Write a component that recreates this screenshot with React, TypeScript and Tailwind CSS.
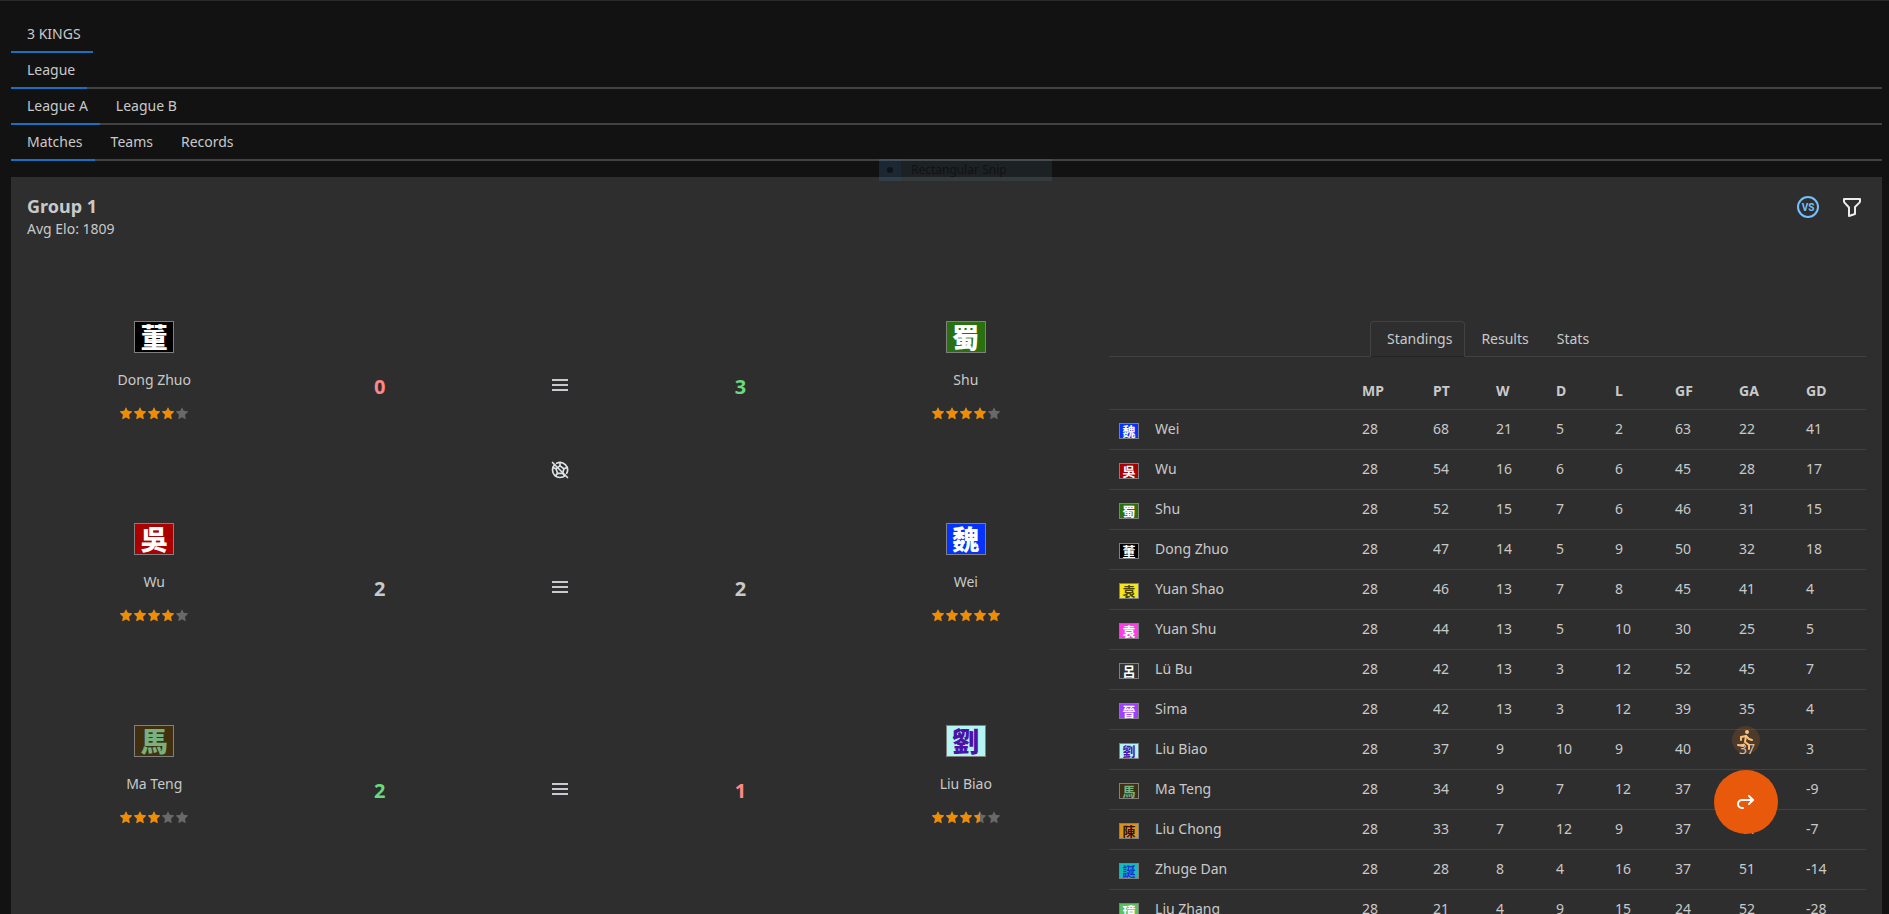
import * as React from "react";
import { TbArrowForwardUp, TbBallFootballOff, TbFilter, TbRun } from "react-icons/tb";
import { clsx } from "clsx";

interface Team {
  name: string;
  glyph: string;
  flag: string;
}

interface Match {
  home: string;
  away: string;
  homeStars: number;
  awayStars: number;
  score: [number, number];
  noGoals?: boolean;
}

const TEAMS: Team[] = [
  { name: "Wei", glyph: "魏", flag: "bg-[#0433ff] text-white" },
  { name: "Wu", glyph: "吳", flag: "bg-[#aa0000] text-white" },
  { name: "Shu", glyph: "蜀", flag: "bg-[#2b7010] text-white" },
  { name: "Dong Zhuo", glyph: "董", flag: "bg-black text-white" },
  { name: "Yuan Shao", glyph: "袁", flag: "bg-[#f4e61e] text-[#4a4000]" },
  { name: "Yuan Shu", glyph: "袁", flag: "bg-[#ff3ce6] text-white" },
  { name: "Lü Bu", glyph: "呂", flag: "bg-[#333333] text-white" },
  { name: "Sima", glyph: "晉", flag: "bg-[#a040ff] text-white" },
  { name: "Liu Biao", glyph: "劉", flag: "bg-[#b4f5f2] text-[#4a12a8]" },
  { name: "Ma Teng", glyph: "馬", flag: "bg-[#403010] text-[#78b080]" },
  { name: "Liu Chong", glyph: "陳", flag: "bg-[#dc911c] text-[#2c1018]" },
  { name: "Zhuge Dan", glyph: "誕", flag: "bg-[#14bcbc] text-[#1633d0]" },
  { name: "Liu Zhang", glyph: "璋", flag: "bg-[#5cc060] text-white" },
];

const COLUMNS = ["MP", "PT", "W", "D", "L", "GF", "GA", "GD"];

// Same order as TEAMS
const STANDINGS: number[][] = [
  [28, 68, 21, 5, 2, 63, 22, 41],
  [28, 54, 16, 6, 6, 45, 28, 17],
  [28, 52, 15, 7, 6, 46, 31, 15],
  [28, 47, 14, 5, 9, 50, 32, 18],
  [28, 46, 13, 7, 8, 45, 41, 4],
  [28, 44, 13, 5, 10, 30, 25, 5],
  [28, 42, 13, 3, 12, 52, 45, 7],
  [28, 42, 13, 3, 12, 39, 35, 4],
  [28, 37, 9, 10, 9, 40, 37, 3],
  [28, 34, 9, 7, 12, 37, 46, -9],
  [28, 33, 7, 12, 9, 37, 44, -7],
  [28, 28, 8, 4, 16, 37, 51, -14],
  [28, 21, 4, 9, 15, 24, 52, -28],
];

const MATCHES: Match[] = [
  { home: "Dong Zhuo", away: "Shu", homeStars: 4, awayStars: 4, score: [0, 3], noGoals: true },
  { home: "Wu", away: "Wei", homeStars: 4, awayStars: 5, score: [2, 2] },
  { home: "Ma Teng", away: "Liu Biao", homeStars: 3, awayStars: 3.5, score: [2, 1] },
];

const NAV_ROWS: string[][] = [["3 KINGS"], ["League"], ["League A", "League B"], ["Matches", "Teams", "Records"]];

function Flag({ name, large = false }: { name: string; large?: boolean }): React.JSX.Element {
  const team = TEAMS.find((t) => t.name === name) ?? TEAMS[0];
  return (
    <span
      className={clsx(
        "flex shrink-0 items-center justify-center border border-[#808080] font-['Noto_Sans_CJK_TC',sans-serif]",
        large ? "h-8 w-10 text-[27px] leading-[30px] font-black" : "h-4 w-5 text-[13px] leading-[14px] font-bold",
        team.flag,
      )}
    >
      {team.glyph}
    </span>
  );
}

function Star({ fill }: { fill: number }): React.JSX.Element {
  const d =
    "M12 2.2l2.9 6.1 6.7.9c.6.1.8.8.4 1.2l-4.9 4.7 1.2 6.6c.1.6-.5 1-1 .7L12 19.2l-5.3 3.2c-.5.3-1.1-.1-1-.7l1.2-6.6L2 10.4c-.4-.4-.2-1.1.4-1.2l6.7-.9z";
  return (
    <span className="relative block size-[14px]">
      <svg viewBox="0 0 24 24" className="size-[14px] fill-[#696969]"><path d={d} /></svg>
      <span className="absolute inset-y-0 left-0 overflow-hidden" style={{ width: `${fill * 100}%` }}>
        <svg viewBox="0 0 24 24" className="size-[14px] max-w-none fill-[#f08c00]"><path d={d} /></svg>
      </span>
    </span>
  );
}

function TeamCard({ name, stars }: { name: string; stars: number }): React.JSX.Element {
  return (
    <div className="col-span-3 flex h-32 flex-col items-center">
      <Flag name={name} large />
      <p className="mt-[15px] leading-6">{name}</p>
      <div role="img" aria-label={`${stars} of 5 stars`} className="mt-[14px] flex">
        {[0, 1, 2, 3, 4].map((i) => (
          <Star key={i} fill={Math.max(0, Math.min(1, stars - i))} />
        ))}
      </div>
    </div>
  );
}

function Score({ own, other }: { own: number; other: number }): React.JSX.Element {
  return (
    <p
      className={clsx(
        "col-span-2 pt-1 text-center text-xl font-bold",
        own > other && "text-[#69db7c]",
        own < other && "text-[#ff8787]",
      )}
    >
      {own}
    </p>
  );
}

function MatchRow({ match }: { match: Match }): React.JSX.Element {
  const [home, away] = match.score;
  return (
    <div>
      <div className="grid grid-cols-12 items-center gap-4">
        <TeamCard name={match.home} stars={match.homeStars} />
        <Score own={home} other={away} />
        <button type="button" aria-label="Match menu" className="col-span-2 justify-self-center p-1">
          <svg viewBox="0 0 16 12" className="h-3 w-4 fill-[#c9c9d0]">
            <path d="M0 0h16v2H0zM0 5h16v2H0zM0 10h16v2H0z" />
          </svg>
        </button>
        <Score own={away} other={home} />
        <TeamCard name={match.away} stars={match.awayStars} />
      </div>
      <div className="flex h-[74px] justify-center pt-[11px]">
        {match.noGoals && <TbBallFootballOff className="size-5 text-[#dee2e6]" />}
      </div>
    </div>
  );
}

function NavTabs(): React.JSX.Element {
  return (
    <nav>
      {NAV_ROWS.map((row, i) => (
        <div key={row[0]} className={clsx("flex h-9 border-b-2", i === 0 ? "border-transparent" : "border-[#424242]")}>
          {row.map((label, j) => (
            <button
              key={label}
              type="button"
              className={clsx("-mb-[2px] h-9 border-b-2 pr-3 pl-4", j === 0 ? "border-[#1971c2]" : "border-transparent")}
            >
              {label}
            </button>
          ))}
        </div>
      ))}
    </nav>
  );
}

function Standings(): React.JSX.Element {
  return (
    <table className="mt-4 w-full table-fixed text-left">
      <colgroup>
        <col className="w-[243px]" />
        <col className="w-[71px]" />
        <col className="w-[63px]" />
        <col className="w-[60px]" />
        <col className="w-[59px]" />
        <col className="w-[60px]" />
        <col className="w-[64px]" />
        <col className="w-[67px]" />
        <col className="w-[70px]" />
      </colgroup>
      <thead>
        <tr className="h-9 border-b border-[#424242]">
          <td />
          {COLUMNS.map((c) => (
            <th key={c} scope="col" className="px-[10px] font-bold">{c}</th>
          ))}
        </tr>
      </thead>
      <tbody>
        {TEAMS.map((team, i) => (
          <tr key={team.name} className="h-10 border-b border-[#424242]">
            <td className="px-[10px]">
              <div className="flex items-center gap-4">
                <span className="pt-[3px]">
                  <Flag name={team.name} />
                </span>
                {team.name}
              </div>
            </td>
            {STANDINGS[i].map((value, j) => (
              <td key={COLUMNS[j]} className="px-[10px]">{value}</td>
            ))}
          </tr>
        ))}
      </tbody>
    </table>
  );
}

export default function App(): React.JSX.Element {
  return (
    <div className="relative flex h-screen flex-col overflow-hidden border-t border-[#2a2a2a] bg-[#121212] pt-4 pr-[7px] pl-[11px] font-['Noto_Sans','Noto_Sans_CJK_TC',sans-serif] text-sm text-[#c9c9c9]">
      <NavTabs />

      <main className="mt-4 flex-1 bg-[#2e2e2e] px-4 pt-4">
        <header className="flex items-start justify-between">
          <div>
            <h1 className="text-lg leading-[26px] font-bold">Group 1</h1>
            <p className="leading-5">Avg Elo: 1809</p>
          </div>
          <div className="flex h-7 items-center gap-5 pr-[2px]">
            <button type="button" aria-label="Versus">
              <svg viewBox="0 0 24 24" className="size-6">
                <circle cx="12" cy="12" r="10" fill="none" stroke="#74c0fc" strokeWidth="2" />
                <text x="12" y="15.5" textAnchor="middle" className="fill-[#74c0fc] font-['Roboto',sans-serif] text-[10px] font-bold">
                  VS
                </text>
              </svg>
            </button>
            <button type="button" aria-label="Filter">
              <TbFilter className="size-6 text-[#e9ecef]" />
            </button>
          </div>
        </header>

        <div className="mt-[82px] grid grid-cols-12 gap-4">
          <section className="col-span-7">
            {MATCHES.map((match) => (
              <MatchRow key={match.home} match={match} />
            ))}
          </section>

          <section className="col-span-5">
            <div role="tablist" className="flex h-9 justify-center border-b border-[#424242]">
              <button type="button" role="tab" aria-selected="true" className="-mb-px h-9 rounded-t border border-[#424242] border-b-[#242424] pr-3 pl-4">
                Standings
              </button>
              <button type="button" role="tab" aria-selected="false" className="pr-3 pl-4">Results</button>
              <button type="button" role="tab" aria-selected="false" className="px-4">Stats</button>
            </div>
            <Standings />
          </section>
        </div>
      </main>

      {/* Fading menu entry left over the page */}
      <div className="absolute top-[158px] left-[879px] flex h-[22px] w-[173px] items-center bg-[#73a5c3]/10 text-xs text-[#121212]">
        <span className="flex h-full w-[22px] items-center justify-center bg-[#2060c0]/10">
          <span className="size-[6px] rounded-full bg-[#121212]" />
        </span>
        <span className="pl-[10px]">Rectangular Snip</span>
      </div>

      <div className="fixed right-[111px] bottom-20 flex flex-col items-center gap-4">
        <button type="button" aria-label="Skip ahead" className="flex size-7 items-center justify-center rounded-full bg-[#fd7e14]/15 text-[#ffc078]">
          <TbRun className="size-6" />
        </button>
        <button type="button" aria-label="Next round" className="flex size-16 items-center justify-center rounded-full bg-[#e8590c] text-white">
          <TbArrowForwardUp className="size-6" />
        </button>
      </div>
    </div>
  );
}
